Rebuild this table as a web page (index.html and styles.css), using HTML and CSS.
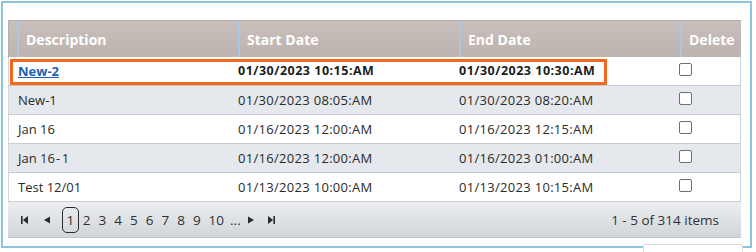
FILE: index.html
```html
<!DOCTYPE html>
<html>
<head>
<meta charset="utf-8">
<link rel="stylesheet" href="styles.css">
</head>
<body>
<div class="panel">
  <div class="grid">
    <div class="row head">
      <div class="c0"></div>
      <div class="th">Description</div>
      <div class="th">Start Date</div>
      <div class="th">End Date</div>
      <div class="th">Delete</div>
    </div>
    <div class="row odd sel">
      <div class="c0"></div>
      <div class="td"><a class="link" href="#">New-2</a></div>
      <div class="td date">01/30/2023 10:15:AM</div>
      <div class="td date">01/30/2023 10:30:AM</div>
      <div class="td chk"><span class="box"></span></div>
    </div>
    <div class="row even">
      <div class="c0"></div>
      <div class="td">New-1</div>
      <div class="td date">01/30/2023 08:05:AM</div>
      <div class="td date">01/30/2023 08:20:AM</div>
      <div class="td chk"><span class="box"></span></div>
    </div>
    <div class="row odd">
      <div class="c0"></div>
      <div class="td">Jan 16</div>
      <div class="td date">01/16/2023 12:00:AM</div>
      <div class="td date">01/16/2023 12:15:AM</div>
      <div class="td chk"><span class="box"></span></div>
    </div>
    <div class="row even">
      <div class="c0"></div>
      <div class="td">Jan 16<span class="wide">-</span>1</div>
      <div class="td date">01/16/2023 12:00:AM</div>
      <div class="td date">01/16/2023 01:00:AM</div>
      <div class="td chk"><span class="box"></span></div>
    </div>
    <div class="row odd">
      <div class="c0"></div>
      <div class="td">Test 12/01</div>
      <div class="td date">01/13/2023 10:00:AM</div>
      <div class="td date">01/13/2023 10:15:AM</div>
      <div class="td chk"><span class="box"></span></div>
    </div>
    <div class="pager">
      <div class="nav">
        <svg class="ico first" width="7" height="8" viewBox="0 0 7 8"><rect x="0" y="0" width="1.6" height="8" fill="#2b2b2b"/><polygon points="7,0 7,8 1.8,4" fill="#2b2b2b"/></svg>
        <svg class="ico prev" width="6" height="8" viewBox="0 0 6 8"><polygon points="6,0.5 6,7.5 0,4" fill="#2b2b2b"/></svg>
        <span class="pg cur">1</span>
        <span class="pg">2</span>
        <span class="pg">3</span>
        <span class="pg">4</span>
        <span class="pg">5</span>
        <span class="pg">6</span>
        <span class="pg">7</span>
        <span class="pg">8</span>
        <span class="pg">9</span>
        <span class="pg">10</span>
        <span class="pg more">...</span>
        <svg class="ico next" width="6" height="8" viewBox="0 0 6 8"><polygon points="0,0.5 0,7.5 6,4" fill="#2b2b2b"/></svg>
        <svg class="ico last" width="7" height="8" viewBox="0 0 7 8"><polygon points="0,0 0,8 5.2,4" fill="#2b2b2b"/><rect x="5.4" y="0" width="1.6" height="8" fill="#2b2b2b"/></svg>
      </div>
      <div class="info">1 - 5 of 314 items</div>
    </div>
  </div>
  <div class="highlight"></div>
</div>
<div class="peek"></div>
</body>
</html>
```
FILE: styles.css
```css
html, body {
  margin: 0;
  padding: 0;
  background: #ffffff;
}
body {
  width: 756px;
  height: 252px;
  position: relative;
  overflow: hidden;
  font-family: "Open Sans", "Noto Sans", sans-serif;
  color: #2a2a2a;
}
.panel {
  position: relative;
  margin: 1px 0 0 1px;
  border: 2px solid #8ec4dc;
  padding: 17px 0 0 5px;
  box-sizing: border-box;
  width: 751px;
  height: 247px;
  background: #fff;
}
.grid {
  width: 733px;
}
.row {
  display: grid;
  grid-template-columns: 9px 221px 221px 221px 61px;
  box-sizing: border-box;
}
.head {
  height: 37px;
  background: linear-gradient(#c8bfba, #bdb4af);
  border-top: 1px solid #b2aba7;
}
.head .c0 {
  box-shadow: inset 1px 0 #b5aeaa;
}
.th {
  border-left: 2px solid #a9c8e6;
  padding-left: 7px;
  display: flex;
  align-items: center;
  color: #ffffff;
  font-weight: 700;
  font-size: 14px;
  white-space: nowrap;
  overflow: hidden;
}
.row.odd, .row.even {
  height: 29px;
  border-bottom: 1px solid #c8cbd0;
  box-shadow: inset 1px 0 #d3d5d8, inset -1px 0 #d3d5d8;
  font-size: 13px;
}
.row.odd { background: #ffffff; }
.row.even { background: #e5e8ec; }
.td {
  display: flex;
  align-items: center;
  padding-left: 1px;
  white-space: nowrap;
  padding-bottom: 1px;
}
.td.date {
  padding-left: 0;
  letter-spacing: 0.3px;
}
.wide {
  padding: 0 1.5px 0 1px;
}
.sel .td {
  font-weight: 700;
  color: #1c1c1c;
}
.sel .td.date {
  font-size: 12.5px;
  letter-spacing: 0.5px;
}
.link {
  color: #1c5fae;
  text-decoration: underline;
  font-size: 13px;
}
.td.chk {
  align-items: flex-start;
  padding-left: 0;
  margin-left: -1px;
}
.box {
  display: block;
  margin-top: 6px;
  width: 11px;
  height: 11px;
  border: 1px solid #6f6f6f;
  border-radius: 2px;
  background: #fff;
}
.pager {
  height: 36px;
  display: flex;
  align-items: center;
  justify-content: space-between;
  background: linear-gradient(#eceef0, #d2d5d9);
  border-bottom: 1px solid #c2c5c9;
  box-sizing: border-box;
  font-size: 13.5px;
  color: #2f2f2f;
}
.nav {
  display: flex;
  align-items: center;
  padding-left: 13px;
}
.ico { display: block; }
.prev { margin-left: 16px; }
.pg {
  padding: 0 4px;
  line-height: 24px;
}
.pg.cur {
  margin-left: 12px;
  padding: 0 3.5px;
  border: 1px solid #2b2b2b;
  border-radius: 5px;
}
.pg.more {
  padding: 0;
  margin-left: 2px;
}
.next { margin-left: 7px; }
.last { margin-left: 14px; }
.info {
  padding-right: 22px;
  color: #333;
}
.highlight {
  position: absolute;
  left: 7px;
  top: 56px;
  width: 597px;
  height: 26px;
  border: 3px solid #f2691d;
  box-sizing: border-box;
}
.peek {
  position: absolute;
  left: 643px;
  top: 244px;
  width: 98px;
  height: 12px;
  background: #fff;
  border: 1px solid #dcdcdc;
  border-radius: 2px;
}
```
